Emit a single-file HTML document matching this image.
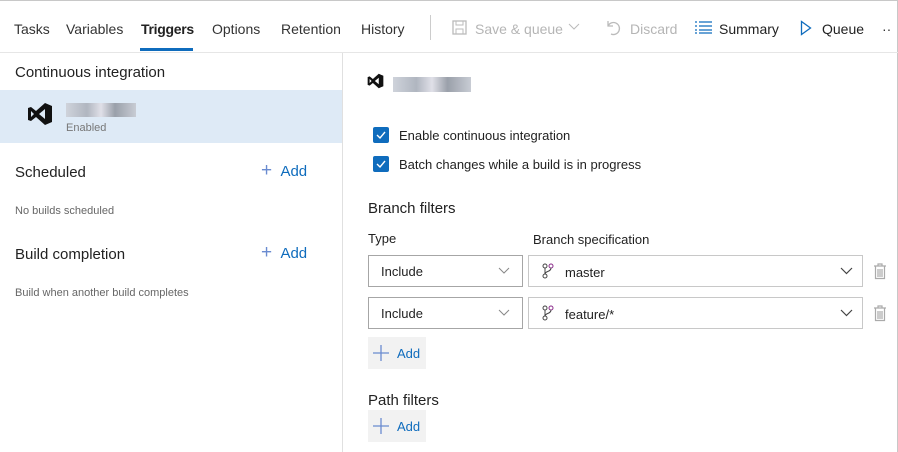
<!DOCTYPE html>
<html><head><style>
*{margin:0;padding:0;box-sizing:border-box}
body{width:898px;height:452px;background:#fff;font-family:"Segoe UI","Liberation Sans",sans-serif;color:#222;position:relative;overflow:hidden;font-size:14px}
.a{position:absolute;white-space:nowrap}
.frame{position:absolute;left:0;top:0;width:898px;height:452px;border:1px solid #c8c8c8;border-left:none;border-bottom:none}
.tab{top:21px;font-size:14px;color:#333}
.gray{color:#b5b5b5}
.box{position:absolute;border:1px solid #a6a6a6;background:#fff}
.box2{position:absolute;border:1px solid #c8c8c8;background:#fff}
.cb{position:absolute;width:16px;height:16px;background:#0f6cbd;border-radius:2px}
.blur{position:absolute;background:linear-gradient(90deg,#cfd3db,#b0b6c0 30%,#e0e0e8 50%,#9aa0aa 70%,#c8ccd4);}
.addbtn{position:absolute;width:58px;height:32px;background:#f2f2f2;color:#0f6cbd;font-size:14px}
</style></head><body>
<div class="frame"></div>
<div class="a tab" style="left:14px">Tasks</div>
<div class="a tab" style="left:66px">Variables</div>
<div class="a tab" style="left:141px;font-weight:600;color:#222;letter-spacing:-0.3px">Triggers</div>
<div class="a" style="left:140px;top:48px;width:53px;height:3px;background:#0f6cbd"></div>
<div class="a tab" style="left:212px">Options</div>
<div class="a tab" style="left:281px">Retention</div>
<div class="a tab" style="left:361px">History</div>
<div class="a" style="left:430px;top:15px;width:1px;height:25px;background:#ccc"></div>
<svg class="a" style="left:452px;top:20px" width="15" height="15"><rect x="1" y="1" width="13" height="13" fill="none" stroke="#bbb" stroke-width="1.3"/><rect x="4" y="1" width="7" height="4" fill="none" stroke="#bbb"/><rect x="4" y="9" width="7" height="5" fill="none" stroke="#bbb"/></svg>
<div class="a tab gray" style="left:475px">Save &amp; queue</div>
<svg class="a" style="left:568px;top:23px" width="12" height="8"><path d="M1 1l5 5 5-5" fill="none" stroke="#bbb"/></svg>
<svg class="a" style="left:605px;top:19px" width="16" height="17"><path d="M3 2v5h5M3 7a6 6 0 1 1 3 8" fill="none" stroke="#bbb" stroke-width="1.3"/></svg>
<div class="a tab gray" style="left:630px">Discard</div>
<svg class="a" style="left:695px;top:21px" width="17" height="13"><path d="M0 1h2M4 1h13M0 5h2M4 5h13M0 9h2M4 9h13M0 12h2M4 12h13" stroke="#0f6cbd" stroke-width="1.2"/></svg>
<div class="a tab" style="left:719px;color:#222">Summary</div>
<svg class="a" style="left:800px;top:20px" width="12" height="16"><path d="M1.5 1.5l9 6.5-9 6.5z" fill="none" stroke="#0f6cbd" stroke-width="1.3"/></svg>
<div class="a tab" style="left:822px;color:#222">Queue</div>
<div class="a tab" style="left:882px;color:#333">··</div>
<div class="a" style="left:0;top:52px;width:898px;height:1px;background:#e6e6e6"></div>
<div class="a" style="left:342px;top:53px;width:1px;height:399px;background:#e0e0e0"></div>

<div class="a" style="left:15px;top:64px;font-size:15px">Continuous integration</div>
<div class="a" style="left:0;top:90px;width:342px;height:53px;background:#deeaf6"></div>
<svg class="a" style="left:27px;top:102px" width="26" height="24" viewBox="0 0 26 24"><path d="M18 1l7 3v16l-7 3-9-8-5 4-3-1V6l3-1 5 4zM4 9v6l3-3zM18 7l-6 5 6 5z" fill="#111" fill-rule="evenodd"/></svg>
<div class="blur" style="left:66px;top:103px;width:70px;height:14px"></div>
<div class="a" style="left:66px;top:122px;font-size:11px;color:#777">Enabled</div>
<div class="a" style="left:15px;top:164px;font-size:15px">Scheduled</div>
<div class="a" style="left:261px;top:163px;font-size:15px;color:#0f6cbd"><span style="font-size:19px;line-height:15px;color:#6a8bd0">+</span>&nbsp;&nbsp;Add</div>
<div class="a" style="left:15px;top:205px;font-size:11px;color:#666">No builds scheduled</div>
<div class="a" style="left:15px;top:246px;font-size:15px">Build completion</div>
<div class="a" style="left:261px;top:245px;font-size:15px;color:#0f6cbd"><span style="font-size:19px;line-height:15px;color:#6a8bd0">+</span>&nbsp;&nbsp;Add</div>
<div class="a" style="left:15px;top:287px;font-size:11px;color:#666">Build when another build completes</div>

<svg class="a" style="left:367px;top:73px" width="17" height="16" viewBox="0 0 26 24"><path d="M18 1l7 3v16l-7 3-9-8-5 4-3-1V6l3-1 5 4zM4 9v6l3-3zM18 7l-6 5 6 5z" fill="#111" fill-rule="evenodd"/></svg>
<div class="blur" style="left:393px;top:77px;width:78px;height:15px"></div>
<div class="cb" style="left:373px;top:127px"></div><svg class="a" style="left:373px;top:127px" width="16" height="16"><path d="M4 8l3 3 5-6" fill="none" stroke="#fff" stroke-width="1.4"/></svg>
<div class="a" style="left:399px;top:128px;font-size:13px">Enable continuous integration</div>
<div class="cb" style="left:373px;top:156px"></div><svg class="a" style="left:373px;top:156px" width="16" height="16"><path d="M4 8l3 3 5-6" fill="none" stroke="#fff" stroke-width="1.4"/></svg>
<div class="a" style="left:399px;top:157px;font-size:13px">Batch changes while a build is in progress</div>
<div class="a" style="left:368px;top:200px;font-size:15px">Branch filters</div>
<div class="a" style="left:368px;top:231px;font-size:13px">Type</div>
<div class="a" style="left:533px;top:232px;font-size:13px">Branch specification</div>

<div class="box" style="left:368px;top:255px;width:155px;height:32px"></div>
<div class="a" style="left:381px;top:264px;font-size:13px">Include</div>
<svg class="a" style="left:498px;top:267px" width="12" height="7"><path d="M1 1l5 5 5-5" fill="none" stroke="#888"/></svg>
<div class="box2" style="left:528px;top:255px;width:335px;height:32px"></div>
<svg class="a" style="left:541px;top:263px" width="14" height="16"><circle cx="4" cy="3" r="2" fill="none" stroke="#444"/><circle cx="10" cy="3" r="2" fill="none" stroke="#8b2d8b"/><circle cx="4" cy="13" r="2" fill="none" stroke="#444"/><path d="M4 5v6M10 5c0 4-6 3-6 6" fill="none" stroke="#444"/></svg>
<div class="a" style="left:565px;top:265px;font-size:13px">master</div>
<svg class="a" style="left:840px;top:267px" width="13" height="8"><path d="M1 1l5.5 5.5L12 1" fill="none" stroke="#444" stroke-width="1.2"/></svg>
<svg class="a" style="left:873px;top:263px" width="14" height="17"><path d="M1 3h12M5 3V1h4v2M2.5 3.5v12h9v-12M5 6v8M7 6v8M9 6v8" fill="none" stroke="#aaa" stroke-width="1.2"/></svg>

<div class="box" style="left:368px;top:297px;width:155px;height:32px"></div>
<div class="a" style="left:381px;top:306px;font-size:13px">Include</div>
<svg class="a" style="left:498px;top:309px" width="12" height="7"><path d="M1 1l5 5 5-5" fill="none" stroke="#888"/></svg>
<div class="box2" style="left:528px;top:297px;width:335px;height:32px"></div>
<svg class="a" style="left:541px;top:305px" width="14" height="16"><circle cx="4" cy="3" r="2" fill="none" stroke="#444"/><circle cx="10" cy="3" r="2" fill="none" stroke="#8b2d8b"/><circle cx="4" cy="13" r="2" fill="none" stroke="#444"/><path d="M4 5v6M10 5c0 4-6 3-6 6" fill="none" stroke="#444"/></svg>
<div class="a" style="left:565px;top:307px;font-size:13px">feature/*</div>
<svg class="a" style="left:840px;top:309px" width="13" height="8"><path d="M1 1l5.5 5.5L12 1" fill="none" stroke="#444" stroke-width="1.2"/></svg>
<svg class="a" style="left:873px;top:305px" width="14" height="17"><path d="M1 3h12M5 3V1h4v2M2.5 3.5v12h9v-12M5 6v8M7 6v8M9 6v8" fill="none" stroke="#aaa" stroke-width="1.2"/></svg>

<div class="addbtn" style="left:368px;top:337px"></div>
<svg class="a" style="left:373px;top:345px" width="16" height="16"><path d="M8 0v16M0 8h16" stroke="#6a8bd0" stroke-width="1.3"/></svg>
<div class="a" style="left:397px;top:346px;font-size:13px;color:#0f6cbd">Add</div>
<div class="a" style="left:368px;top:392px;font-size:15px">Path filters</div>
<div class="addbtn" style="left:368px;top:410px"></div>
<svg class="a" style="left:373px;top:418px" width="16" height="16"><path d="M8 0v16M0 8h16" stroke="#6a8bd0" stroke-width="1.3"/></svg>
<div class="a" style="left:397px;top:419px;font-size:13px;color:#0f6cbd">Add</div>
</body></html>
